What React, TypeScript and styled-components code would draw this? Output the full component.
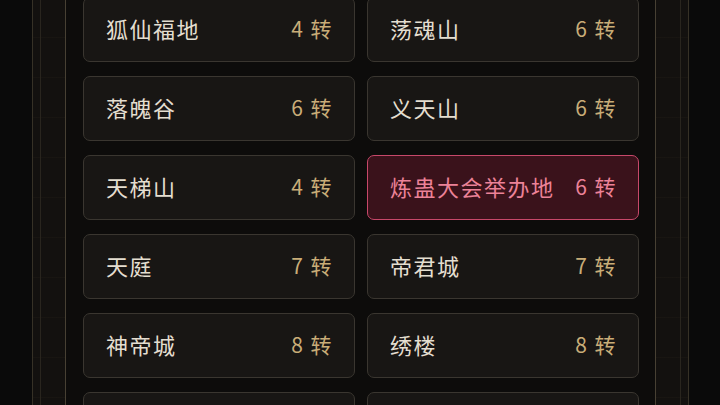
import { styled, createGlobalStyle } from "styled-components";

const GlobalStyle = createGlobalStyle`
  html, body {
    margin: 0;
    padding: 0;
    background: #0a0a0a;
    height: 100%;
    overflow: hidden;
  }
  #root {
    height: 100%;
  }
`;

const Frame = styled.div`
  height: 100%;
  margin: 0 31px 0 32px;
  padding: 0 7px;
  border-left: 1px solid #363126;
  border-right: 1px solid #363126;
  background-color: #13110f;
  background-image: linear-gradient(rgba(120, 100, 70, 0.05) 1px, transparent 1px);
  background-size: 100% 40px;
  background-position: 0 37px;
`;

const InnerLine = styled.div`
  height: 100%;
  padding: 0 24px;
  border-left: 1px solid #29251e;
  border-right: 1px solid #29251e;
`;

const Panel = styled.div`
  height: 100%;
  overflow: hidden;
  padding: 0 16px 0 17px;
  border-left: 1px solid #474033;
  border-right: 1px solid #474033;
  background: #0d0c0b;
`;

const Grid = styled.div`
  display: grid;
  grid-template-columns: 1fr 1fr;
  gap: 14px 12px;
  margin-top: -3px;
`;

const Card = styled.div<{ $active?: boolean }>`
  height: 65px;
  box-sizing: border-box;
  display: flex;
  align-items: center;
  justify-content: space-between;
  padding: 0 21px 4px 22px;
  border-radius: 7px;
  border: 1px solid ${(p) => (p.$active ? "#c7486a" : "#3a3630")};
  background: ${(p) => (p.$active ? "#3a121b" : "#181614")};
  font-family: "Noto Sans CJK SC", "Noto Sans", sans-serif;
`;

const Name = styled.span<{ $active?: boolean }>`
  font-size: 22px;
  letter-spacing: 1.5px;
  color: ${(p) => (p.$active ? "#ec8298" : "#e4ded0")};
`;

const Rank = styled.span<{ $active?: boolean }>`
  font-size: 21px;
  letter-spacing: 1.5px;
  color: ${(p) => (p.$active ? "#ec8298" : "#c9ad78")};
`;

type Place = { name: string; rank: number; active?: boolean };

const places: Place[] = [
  { name: "狐仙福地", rank: 4 },
  { name: "荡魂山", rank: 6 },
  { name: "落魄谷", rank: 6 },
  { name: "义天山", rank: 6 },
  { name: "天梯山", rank: 4 },
  { name: "炼蛊大会举办地", rank: 6, active: true },
  { name: "天庭", rank: 7 },
  { name: "帝君城", rank: 7 },
  { name: "神帝城", rank: 8 },
  { name: "绣楼", rank: 8 },
  { name: "", rank: 0 },
  { name: "", rank: 0 },
];

export default function App() {
  return (
    <>
      <GlobalStyle />
      <Frame>
        <InnerLine>
          <Panel>
            <Grid>
              {places.map((p, i) => (
                <Card key={i} $active={p.active}>
                  <Name $active={p.active}>{p.name}</Name>
                  {p.rank ? <Rank $active={p.active}>{p.rank} 转</Rank> : null}
                </Card>
              ))}
            </Grid>
          </Panel>
        </InnerLine>
      </Frame>
    </>
  );
}
